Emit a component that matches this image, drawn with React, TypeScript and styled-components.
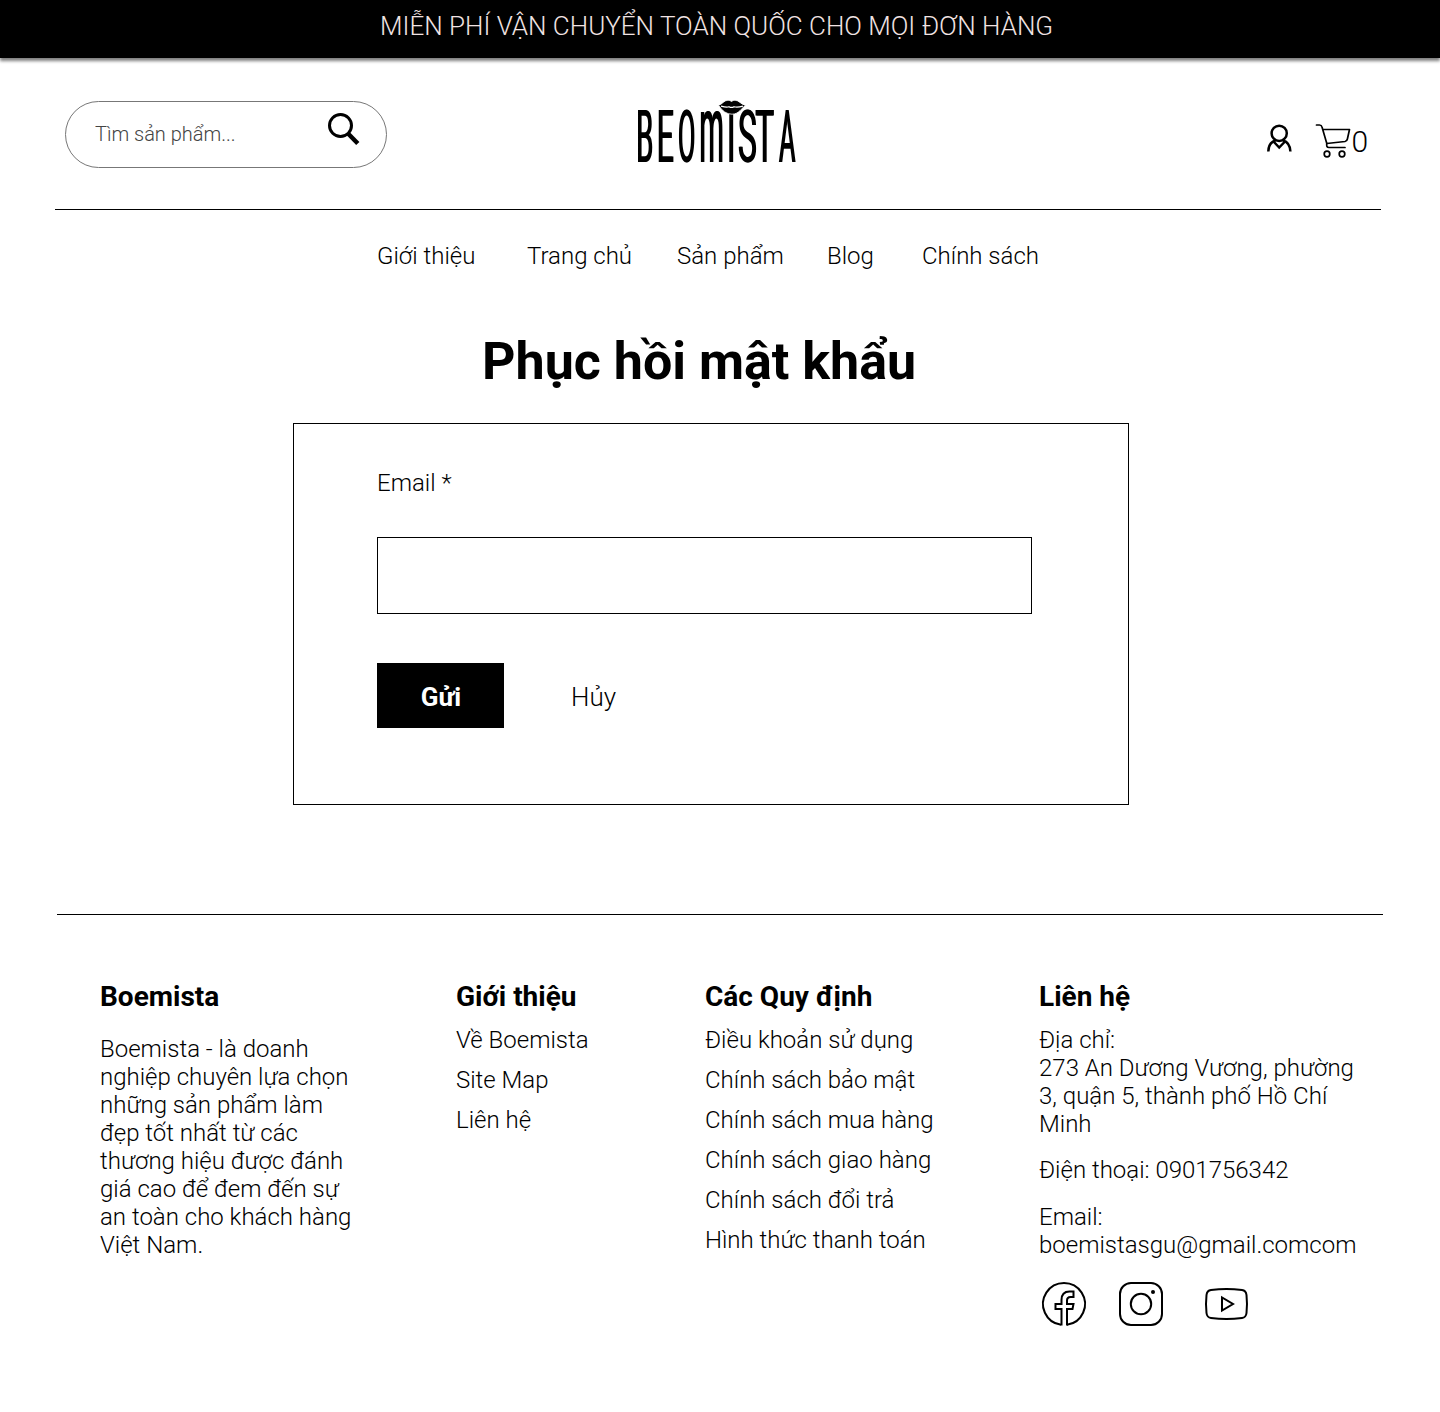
import React from "react";
import styled, { createGlobalStyle } from "styled-components";

const GlobalStyle = createGlobalStyle`
  *, *::before, *::after { box-sizing: border-box; }
  body {
    margin: 0;
    background: #fff;
    color: #000;
    font-family: Roboto, "Noto Sans", sans-serif;
    font-weight: 300;
    font-size: 24px;
    line-height: 28px;
  }
  a { color: inherit; text-decoration: none; }
`;

const Page = styled.div`
  width: 1440px;
  height: 1412px;
  overflow: hidden;
`;

const Banner = styled.div`
  height: 58px;
  padding: 11px 0 0 380px;
  background: #000;
  color: #f1e3e3;
  font-size: 26px;
  line-height: 30px;
  white-space: nowrap;
  box-shadow: 0 3px 3px rgba(0, 0, 0, 0.5);
`;

const Header = styled.header`
  display: flex;
  align-items: flex-start;
  height: 152px;
  margin: 0 59px 0 55px;
  padding: 43px 0 0 10px;
  border-bottom: 1px solid #000;
`;

const Search = styled.form`
  display: flex;
  justify-content: space-between;
  width: 322px;
  height: 67px;
  padding: 9px 25px 0 29px;
  border: 1px solid #777;
  border-radius: 34px;
`;

const SearchInput = styled.input`
  width: 200px;
  height: 46px;
  padding: 0;
  border: 0;
  outline: 0;
  background: transparent;
  font: 300 20px/23px Roboto, "Noto Sans", sans-serif;
  &::placeholder { color: #444; opacity: 1; }
`;

const IconButton = styled.button`
  display: block;
  height: 36px;
  padding: 0;
  border: 0;
  background: none;
`;

const LogoLink = styled.a`
  display: block;
  margin: -3px 0 0 249px;
  height: 68px;
`;

const Actions = styled.div`
  display: flex;
  margin: 22px 0 0 468px;
`;

const Cart = styled.a`
  display: flex;
  gap: 1px;
  margin-left: 21.5px;
  font-size: 30px;
  line-height: 37px;
`;

const Nav = styled.nav`
  display: flex;
  height: 28px;
  margin: 32px 0 0 377px;
  white-space: nowrap;
`;

const NavLink = styled.a<{ $width: number }>`
  width: ${(p) => p.$width}px;
`;

const Title = styled.h1`
  margin: 61px 0 0 482px;
  font-size: 52px;
  line-height: 61px;
  font-weight: 700;
`;

const FormCard = styled.form`
  width: 836px;
  height: 382px;
  margin: 31px 0 0 293px;
  padding: 45px 83px 0;
  border: 1px solid #000;
`;

const FieldLabel = styled.label`
  display: block;
`;

const EmailInput = styled.input`
  display: block;
  width: 655px;
  height: 77px;
  margin-top: 40px;
  padding: 0 20px;
  border: 1px solid #000;
  border-radius: 0;
  outline: 0;
  font: inherit;
`;

const FormActions = styled.div`
  display: flex;
  align-items: center;
  gap: 67px;
  margin-top: 49px;
  font-size: 26px;
`;

const SubmitButton = styled.button`
  width: 127px;
  height: 65px;
  padding: 3px 0 0 1px;
  border: 0;
  background: #000;
  color: #fff;
  font: 700 26px/30px Roboto, "Noto Sans", sans-serif;
`;

const CancelLink = styled.a`
  padding-top: 3px;
`;

const Footer = styled.footer`
  display: grid;
  grid-template-columns: 356px 249px 334px 330px;
  margin: 109px 57px 0;
  padding: 65px 0 0 43px;
  border-top: 1px solid #000;
`;

const FooterHeading = styled.h2`
  margin: 0;
  font-size: 28px;
  line-height: 33px;
  font-weight: 700;
`;

const About = styled.p`
  width: 262px;
  margin: 22px 0 0;
`;

const LinkList = styled.ul`
  display: flex;
  flex-direction: column;
  gap: 12px;
  margin: 13px 0 0;
  padding: 0;
  list-style: none;
`;

const Address = styled.div`
  width: 320px;
  margin-top: 13px;
`;

const ContactLine = styled.div<{ $top: number }>`
  margin-top: ${(p) => p.$top}px;
`;

const Socials = styled.div`
  display: flex;
  align-items: center;
  margin: 21px 0 0 1px;
`;

const SocialLink = styled.a<{ $left?: number }>`
  display: block;
  height: 48px;
  margin-left: ${(p) => p.$left ?? 0}px;
`;

const Icon = styled.svg`
  display: block;
  overflow: visible;
  fill: none;
  stroke: #000;
`;

const Wordmark = styled.g`
  font-family: Roboto, sans-serif;
  font-size: 72px;
  font-weight: 400;
  fill: #000;
  stroke: none;
  filter: drop-shadow(1px 0 0 #000);
`;

const SearchIcon = () => (
  <Icon width="34" height="36" viewBox="0 0 34 36">
    <circle cx="13.500" cy="14.500" r="11" strokeWidth="3" />
    <path d="M21 22.500L30.800 32.500" strokeWidth="4.500" />
  </Icon>
);

const logoLetters = [
  { char: "B", x: -0.2, sx: 0.38, sy: 1 },
  { char: "E", x: 20.3, sx: 0.42, sy: 1 },
  { char: "O", x: 41.6, sx: 0.35, sy: 1 },
  { char: "m", x: 62.9, sx: 0.385, sy: 1.3 },
  { char: "I", x: 90.4, sx: 0.43, sy: 1 },
  { char: "S", x: 101.6, sx: 0.44, sy: 1 },
  { char: "T", x: 118.8, sx: 0.44, sy: 1 },
  { char: "A", x: 142.6, sx: 0.35, sy: 1 },
];

const Logo = () => (
  <Icon width="162" height="68" viewBox="0 0 162 68">
    <Wordmark>
      {logoLetters.map((l) => (
        <text key={l.char} transform={`translate(${l.x} 63.5) scale(${l.sx} ${l.sy})`}>
          {l.char}
        </text>
      ))}
    </Wordmark>
    <g transform="translate(0 1.700)">
      <path
        d="M82.500 5.500C86 5 88 .5 92 .5Q94 .5 95.500 1.800Q97 .5 99 .5C103 .5 105 5 109.500 5.500C106 8 103 14.500 96 14.500Q88 14.500 82.500 5.500Z"
        fill="#000"
        stroke="#fff"
        strokeWidth=".8"
      />
      <path d="M85 6.500Q91 8 93 7Q95.500 8.500 98 7Q101 8 107 6.500" stroke="#fff" strokeWidth="1.200" />
    </g>
  </Icon>
);

const UserIcon = () => (
  <Icon width="26" height="35" viewBox="0 0 26 35" strokeWidth="2.500">
    <circle cx="13.200" cy="10.300" r="7.600" />
    <path d="M2.300 28.500Q2.500 19.500 9.500 17.500M17 17.500Q24 19.500 24.400 28.500" />
    <path d="M7.500 18.500L13.200 24.500L19 18.500" />
  </Icon>
);

const CartIcon = () => (
  <Icon width="37" height="36" viewBox="0 0 37 36" strokeWidth="1.700" strokeLinecap="round" strokeLinejoin="round">
    <path d="M2.500 2H5.500Q7.500 2 8 4L12.800 20.500L31 18.500Q33 18 33.400 16L35.500 6.500H9" />
    <path d="M12.800 20.500Q12 24.500 15 24.500H31" />
    <circle cx="13" cy="31" r="2.800" />
    <circle cx="28" cy="31" r="2.800" />
  </Icon>
);

const FacebookIcon = () => (
  <Icon width="48" height="48" viewBox="0 0 48 48" strokeWidth="2">
    <path d="M21 44.800A21 21 0 1 1 27 44.800" />
    <path d="M21.500 45.500V29H15.500V24H21.500V20Q21.500 11.500 29.500 11.500H33.500V17H30.500Q27 17 27 20.500V24H33.500L32.500 29H27V45.500" />
  </Icon>
);

const InstagramIcon = () => (
  <Icon width="48" height="48" viewBox="0 0 48 48" strokeWidth="2">
    <rect x="3" y="3" width="42" height="42" rx="11" />
    <circle cx="24" cy="24" r="10.200" />
    <circle cx="36" cy="12" r="2" fill="#000" stroke="none" />
  </Icon>
);

const YoutubeIcon = () => (
  <Icon width="48" height="48" viewBox="0 0 48 48" strokeWidth="2">
    <path d="M8 10Q23.500 8 39 10Q43 10.500 43.500 15Q44.500 24 43.500 33Q43 37.500 39 38Q23.500 40 8 38Q4 37.500 3.500 33Q2.500 24 3.500 15Q4 10.500 8 10Z" />
    <path d="M19 17.500V30.500L30 24Z" />
  </Icon>
);

const navItems = [
  { label: "Giới thiệu", width: 150 },
  { label: "Trang chủ", width: 150 },
  { label: "Sản phẩm", width: 150 },
  { label: "Blog", width: 95 },
  { label: "Chính sách", width: 130 },
];

const aboutLinks = ["Về Boemista", "Site Map", "Liên hệ"];

const policyLinks = [
  "Điều khoản sử dụng",
  "Chính sách bảo mật",
  "Chính sách mua hàng",
  "Chính sách giao hàng",
  "Chính sách đổi trả",
  "Hình thức thanh toán",
];

const FooterLinks = ({ title, links }: { title: string; links: string[] }) => (
  <section>
    <FooterHeading>{title}</FooterHeading>
    <LinkList>
      {links.map((link) => (
        <li key={link}>
          <a href="#">{link}</a>
        </li>
      ))}
    </LinkList>
  </section>
);

export default function App() {
  return (
    <Page>
      <GlobalStyle />
      <Banner>MIỄN PHÍ VẬN CHUYỂN TOÀN QUỐC CHO MỌI ĐƠN HÀNG</Banner>
      <Header>
        <Search>
          <SearchInput placeholder="Tìm sản phẩm..." />
          <IconButton type="button">
            <SearchIcon />
          </IconButton>
        </Search>
        <LogoLink href="#">
          <Logo />
        </LogoLink>
        <Actions>
          <a href="#">
            <UserIcon />
          </a>
          <Cart href="#">
            <CartIcon />
            <span>0</span>
          </Cart>
        </Actions>
      </Header>
      <Nav>
        {navItems.map((item) => (
          <NavLink key={item.label} href="#" $width={item.width}>
            {item.label}
          </NavLink>
        ))}
      </Nav>
      <Title>Phục hồi mật khẩu</Title>
      <FormCard>
        <FieldLabel htmlFor="email">Email *</FieldLabel>
        <EmailInput id="email" type="email" />
        <FormActions>
          <SubmitButton type="button">Gửi</SubmitButton>
          <CancelLink href="#">Hủy</CancelLink>
        </FormActions>
      </FormCard>
      <Footer>
        <section>
          <FooterHeading>Boemista</FooterHeading>
          <About>
            Boemista - là doanh nghiệp chuyên lựa chọn những sản phẩm làm đẹp tốt nhất từ các thương hiệu được đánh giá
            cao để đem đến sự an toàn cho khách hàng Việt Nam.
          </About>
        </section>
        <FooterLinks title="Giới thiệu" links={aboutLinks} />
        <FooterLinks title="Các Quy định" links={policyLinks} />
        <section>
          <FooterHeading>Liên hệ</FooterHeading>
          <Address>
            Địa chỉ:
            <br />
            273 An Dương Vương, phường 3, quận 5, thành phố Hồ Chí Minh
          </Address>
          <ContactLine $top={18}>Điện thoại: 0901756342</ContactLine>
          <ContactLine $top={19}>
            Email:
            <br />
            boemistasgu@gmail.comcom
          </ContactLine>
          <Socials>
            <SocialLink href="#">
              <FacebookIcon />
            </SocialLink>
            <SocialLink href="#" $left={29}>
              <InstagramIcon />
            </SocialLink>
            <SocialLink href="#" $left={38}>
              <YoutubeIcon />
            </SocialLink>
          </Socials>
        </section>
      </Footer>
    </Page>
  );
}
